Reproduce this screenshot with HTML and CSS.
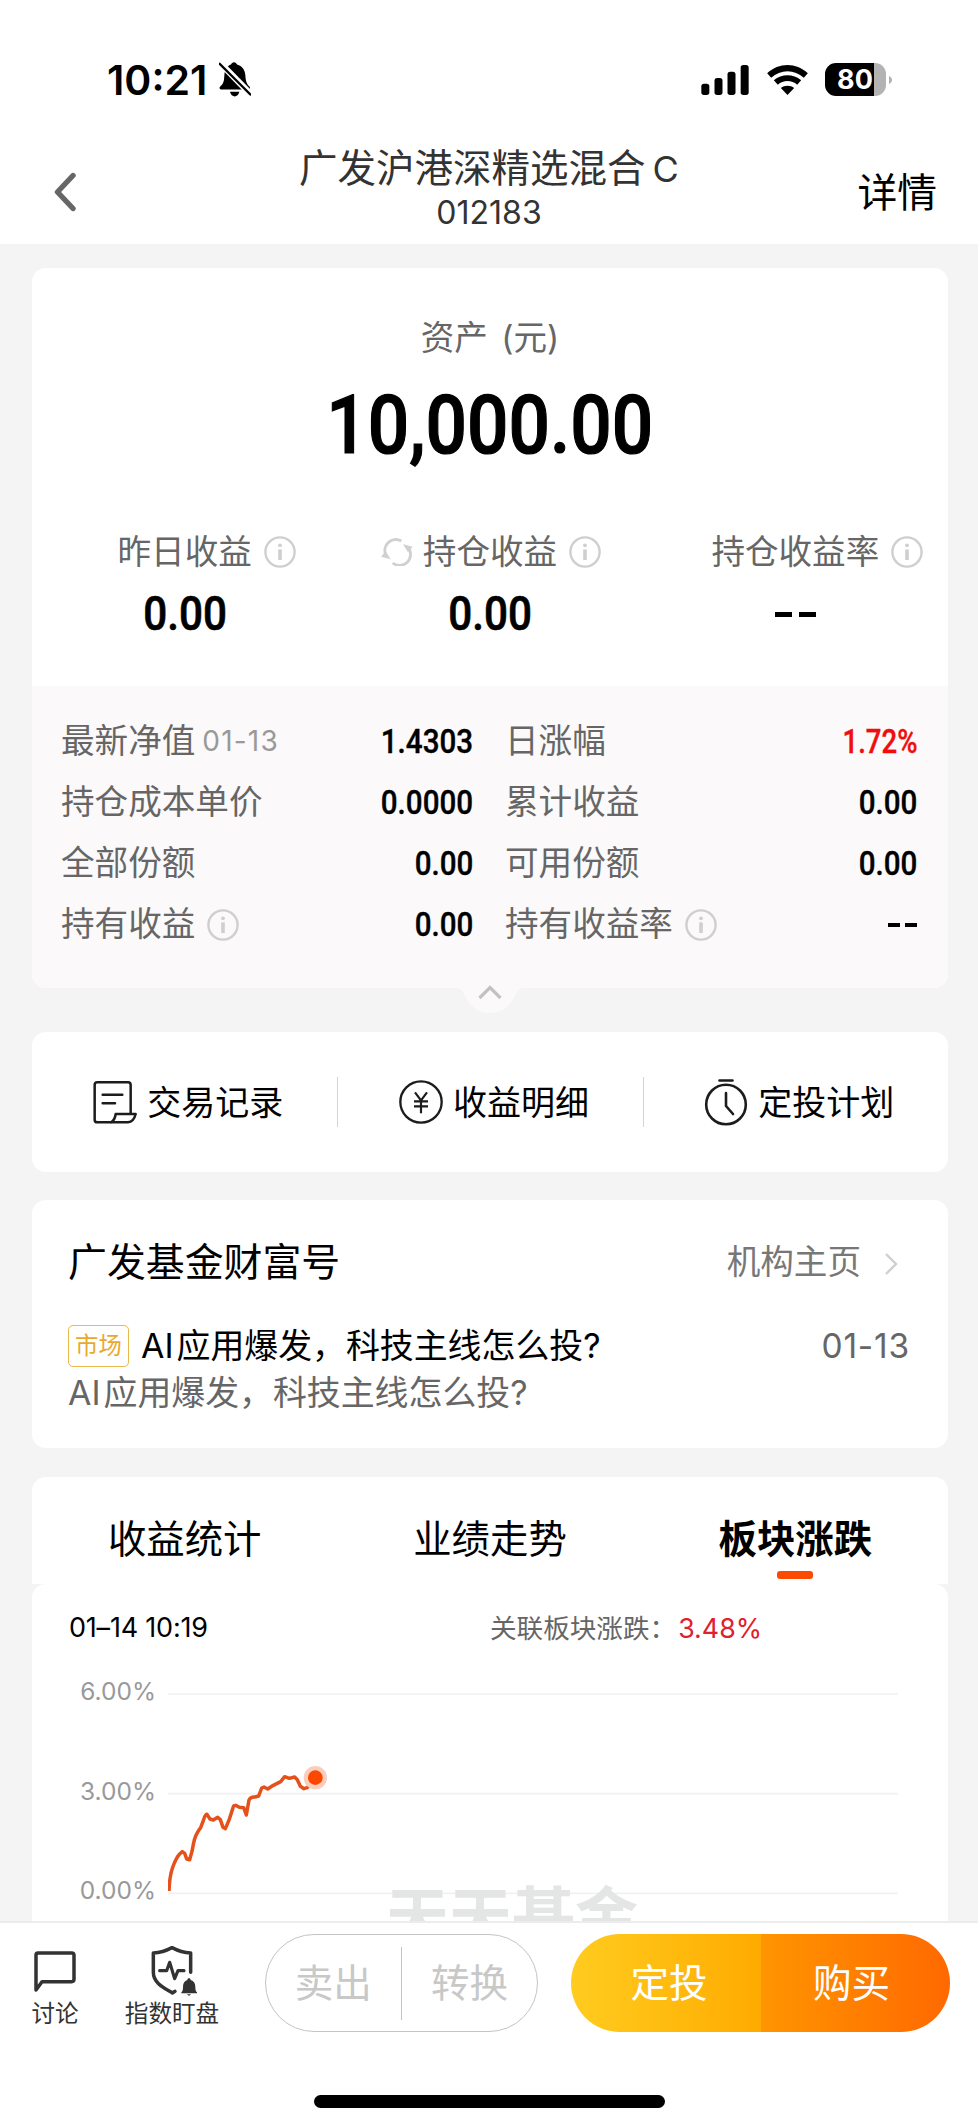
FILE: index.html
```html
<!DOCTYPE html>
<html lang="zh-CN">
<head>
<meta charset="utf-8">
<title>广发沪港深精选混合C</title>
<link rel="stylesheet" href="styles.css">
</head>
<body>
<svg class="defs" width="0" height="0">
  <symbol id="info" viewBox="0 0 32 32">
    <circle cx="16" cy="16" r="14.6" fill="none" stroke="#cfcfcf" stroke-width="2.4"/>
    <circle cx="16" cy="9.3" r="1.9" fill="#cfcfcf"/>
    <path d="M16 13.4V24" stroke="#cfcfcf" stroke-width="3.6" fill="none"/>
  </symbol>
</svg>
<div class="screen">
  <header class="top">
    <div class="status">
      <span class="time">10:21</span>
      <svg class="bell" viewBox="0 0 96 104">
        <path d="M45 0c4 0 8 3 9 7c16 4 24 17 25 32c1 18 4 26 13 35c2 3 1 8-3 8H7c-5 0-7-5-4-8c11-10 12-17 13-33C17 22 24 11 36 7c1-4 5-7 9-7z" fill="#000"/>
        <path d="M33 89h28c-2 9-8 14-14 14s-12-5-14-14z" fill="#000"/>
        <path d="M3 2l92 94" stroke="#fff" stroke-width="19"/>
        <path d="M2 5l92 92" stroke="#000" stroke-width="7" stroke-linecap="round"/>
      </svg>
      <svg class="signal" viewBox="64 72 142 90">
        <rect x="64" y="128" width="24" height="34" rx="8"/>
        <rect x="103.500" y="111" width="24" height="51" rx="8"/>
        <rect x="142.500" y="92" width="24" height="70" rx="8"/>
        <rect x="182" y="72" width="24" height="90" rx="8"/>
      </svg>
      <svg class="wifi" viewBox="260 72 122 90">
        <path d="M260 97C295 64 347 64 382 97L370 110C342 84 300 84 272 110Z"/>
        <path d="M280 118C304 98 338 98 362 118L350 131C334 116 308 116 292 131Z"/>
        <path d="M301 141C312 132 330 132 341 141L321 162Z"/>
      </svg>
      <span class="battery"><span class="charge">80</span></span>
      <svg class="nub" viewBox="0 0 3 8"><path d="M0 0C4 1.500 4 6.500 0 8Z" fill="#b3b3b3"/></svg>
    </div>
    <nav class="nav">
      <svg class="back" viewBox="0 0 22 40"><path d="M19 3.500L3.500 20l15.500 16.500" fill="none" stroke="#666" stroke-width="5.400" stroke-linecap="round" stroke-linejoin="round"/></svg>
      <div class="fund">
        <h1>广发沪港深精选混合<span class="gap">C</span></h1>
        <p class="code">012183</p>
      </div>
      <a class="detail">详情</a>
    </nav>
  </header>

  <main class="content">
    <section class="card asset">
      <p class="asset-label">资产 (元)</p>
      <p class="asset-value"><span class="din">10,000.00</span></p>
      <div class="gains">
        <div class="gain">
          <div class="gain-label"><i></i><span>昨日收益</span><svg class="info"><use href="#info"/></svg></div>
          <div class="gain-value"><span class="din">0.00</span></div>
        </div>
        <div class="gain">
          <div class="gain-label">
            <svg class="refresh" viewBox="64 57 94 84">
              <g fill="none" stroke="#d0d0d0" stroke-width="8.500">
                <path d="M80 113A33 33 0 0 1 124 66"/>
                <path d="M143 84A33 33 0 0 1 98 132"/>
              </g>
              <path d="M63 113L77 97L92 121Z M158 83L144 100L129 76Z" fill="#d0d0d0"/>
            </svg>
            <span>持仓收益</span><svg class="info"><use href="#info"/></svg>
          </div>
          <div class="gain-value"><span class="din">0.00</span></div>
        </div>
        <div class="gain">
          <div class="gain-label"><i></i><span>持仓收益率</span><svg class="info"><use href="#info"/></svg></div>
          <div class="gain-value"><b class="dash"></b><b class="dash"></b></div>
        </div>
      </div>
      <div class="facts">
        <div class="fact"><span>最新净值</span><span class="day">01-13</span><b class="din">1.4303</b></div>
        <div class="fact"><span>日涨幅</span><b class="din up">1.72%</b></div>
        <div class="fact"><span>持仓成本单价</span><b class="din">0.0000</b></div>
        <div class="fact"><span>累计收益</span><b class="din">0.00</b></div>
        <div class="fact"><span>全部份额</span><b class="din">0.00</b></div>
        <div class="fact"><span>可用份额</span><b class="din">0.00</b></div>
        <div class="fact"><span>持有收益</span><svg class="info"><use href="#info"/></svg><b class="din">0.00</b></div>
        <div class="fact"><span>持有收益率</span><svg class="info"><use href="#info"/></svg><span class="none"><b class="dash"></b><b class="dash"></b></span></div>
        <svg class="fold" viewBox="0 0 66 52">
          <path d="M0 26C10 26 8 51 33 51S56 26 66 26Z" fill="#fbf9fa"/>
          <path d="M22.500 36L33 25.500L43.500 36" fill="none" stroke="#c2c2c2" stroke-width="3.200"/>
        </svg>
      </div>
    </section>

    <section class="card actions">
      <a class="action">
        <svg viewBox="38 56 132 132" fill="none" stroke="#1c1c1c" stroke-width="7.500" stroke-linejoin="round" stroke-linecap="round">
          <path d="M151 158V71Q151 63 143 63H51Q43 63 43 71V175Q43 183 51 183H143Q160 182 166 158H106Q104 176 92 183"/>
          <path d="M67 100H126M67 126H104"/>
        </svg>
        <span>交易记录</span>
      </a>
      <a class="action">
        <svg viewBox="958 59 132 132" fill="none" stroke="#1c1c1c" stroke-width="7">
          <circle cx="1024" cy="125" r="62"/>
          <path d="M1006 96L1024 120L1042 96M1024 120V159M1003 123H1045M1003 138H1045" stroke-width="6.500"/>
        </svg>
        <span>收益明细</span>
      </a>
      <a class="action">
        <svg class="clock" viewBox="0 0 44 48" fill="none" stroke="#1c1c1c" stroke-width="2.600" stroke-linecap="round">
          <path d="M15.500 2.500H28.500"/>
          <circle cx="22" cy="26.500" r="19.800"/>
          <path d="M22 15V28L29 36" stroke-linejoin="round"/>
        </svg>
        <span>定投计划</span>
      </a>
    </section>

    <section class="card wealth">
      <div class="wealth-head">
        <h2>广发基金财富号</h2>
        <a>机构主页</a>
        <svg class="more" viewBox="0 0 14 24"><path d="M2 2L12 12L2 22" fill="none" stroke="#cfcfcf" stroke-width="2.400"/></svg>
      </div>
      <div class="post">
        <span class="tag">市场</span>
        <span class="post-title">AI<span class="gap">应用爆发，科技主线怎么投?</span></span>
        <time>01-13</time>
      </div>
      <p class="summary">AI<span class="gap">应用爆发，科技主线怎么投?</span></p>
    </section>

    <section class="trend">
      <div class="tabs">
        <a class="tab">收益统计</a>
        <a class="tab">业绩走势</a>
        <a class="tab active">板块涨跌</a>
      </div>
      <div class="panel">
        <div class="legend">
          <time>01–14 10:19</time>
          <span class="sector">关联板块涨跌：<em>3.48%</em></span>
        </div>
        <div class="chart">
          <div class="axis"><span>6.00%</span><span>3.00%</span><span>0.00%</span></div>
          <div class="plot">
            <svg width="730" height="262" viewBox="504 0 2190 786">
              <path d="M504 102H2694M504 401H2694M504 700H2694" stroke="#f1f1f1" stroke-width="5"/>
              <path d="M507 693C508 665 510 643 518 622C525 603 530 591 539 582L547 575L554 580L560 597L569 599L576 574L580 553C584 530 590 518 602 503L611 479Q615 464 621 463L630 477L640 480L653 472L661 479L669 502L676 506L683 490C691 473 694 456 701 438L707 436L718 442L731 443L739 465L747 420Q752 410 765 411L776 408L785 384L792 381L803 387L820 376L842 365L854 350L868 355L884 351L892 359L901 379L912 386L922 383L946 353" fill="none" stroke="#e4511a" stroke-width="10.500" stroke-linejoin="round"/>
              <circle cx="946" cy="353" r="35" fill="#fbcdbd"/>
              <circle cx="946" cy="353" r="22" fill="#fb4700"/>
            </svg>
            <span class="watermark">天天基金</span>
          </div>
        </div>
      </div>
    </section>
  </main>

  <footer class="bar">
    <div class="bar-row">
      <a class="tool talk">
        <svg viewBox="98 60 132 132" fill="none" stroke="#333" stroke-width="10.500" stroke-linejoin="round"><path d="M107 75Q107 69 113 69H214Q221 69 221 76V148Q221 155 214 155H125L107 180Z"/></svg>
        <span>讨论</span>
      </a>
      <a class="tool watch">
        <svg viewBox="450 44 144 156" fill="none" stroke="#333" stroke-width="10.500" stroke-linejoin="round" stroke-linecap="round">
          <path d="M572 126V68C550 67 533 61 516 52C499 61 482 67 460 68V126C460 158 491 172 517 188L525 183"/>
          <path d="M479 121H500L509 96L524 145L534 121H552" stroke-width="9.500"/>
          <path d="M567 144c3 0 5 2 5 5c10 3 14 11 14 20c0 9 1 13 5 17v3h-47v-3c4-4 5-8 5-17c0-9 4-17 13-20c0-3 2-5 5-5zM561 192h12q-6 8-12 0z" fill="#333" stroke="none"/>
        </svg>
        <span>指数盯盘</span>
      </a>
      <div class="pill sell"><a>卖出</a><i></i><a>转换</a></div>
      <div class="pill buy"><a class="plan">定投</a><a class="now">购买</a></div>
    </div>
    <div class="home"></div>
  </footer>
</div>
</body>
</html>
```
FILE: styles.css
```css
* { box-sizing: border-box; margin: 0; padding: 0; }
body {
  font-family: Inter, "Noto Sans CJK SC", sans-serif;
  font-size: 33.6px;
  line-height: 1.2;
  color: #000;
  background: #f4f4f4;
}
h1, h2 { font-weight: 400; }
i, em { font-style: normal; }
svg { display: block; flex: none; }
.defs { position: absolute; }
.screen { width: 978px; height: 2127px; display: flex; flex-direction: column; overflow: hidden; }

/* numerals in a narrow DIN-like cut */
.din {
  font-family: Roboto, sans-serif;
  font-weight: 500;
  display: inline-block;
  transform: scaleX(.87);
  -webkit-text-stroke: .4px currentColor;
}

.top { height: 244px; flex: none; background: #fff; }
.status { height: 130px; padding: 29px 0 0 107px; display: flex; align-items: center; }
.time { width: 112px; font-size: 41px; font-weight: 600; line-height: 48px; white-space: nowrap; }
.bell { width: 32px; height: 35px; }
.signal { width: 48px; height: 30px; margin-left: 450px; }
.wifi { width: 41px; height: 30px; margin-left: 18px; }
.battery {
  width: 61px; height: 33px; margin-left: 17px; border-radius: 11px; overflow: hidden;
  background: linear-gradient(90deg, #000 49px, #b3b3b3 49px);
}
.charge { display: block; width: 60px; text-align: center; font-size: 27px; font-weight: 700; line-height: 33px; color: #fff; }
.nub { width: 3px; height: 8px; margin-left: 3px; }

.nav { height: 114px; display: grid; grid-template-columns: 200px 1fr 200px; align-items: center; }
.back { width: 22px; height: 40px; margin: 9px 0 0 54px; }
.fund { text-align: center; color: #333; padding-top: 3px; }
.fund h1 { font-size: 38.5px; line-height: 46px; }
.fund .gap { margin-left: 7px; font-size: 36px; }
.code { font-size: 32px; line-height: 41px; }
.detail { font-size: 39.8px; line-height: 48px; margin-top: 11px; padding-right: 41px; text-align: right; }

.content { flex: 1; min-height: 0; overflow: hidden; padding: 24px 30px 0 32px; }
.card { background: #fff; border-radius: 14px; }

.asset { height: 720px; color: #666; }
.asset-label { padding-top: 46px; line-height: 48px; text-align: center; word-spacing: 4px; }
.asset-value { margin-top: 12px; height: 101px; line-height: 100px; text-align: center; font-size: 82px; color: #000; }
.asset-value .din { transform: scaleX(.89); -webkit-text-stroke-width: 1.2px; }
.gains { display: grid; grid-template-columns: repeat(3, 1fr); height: 211px; padding-top: 54px; }
.gain-label { display: grid; grid-template-columns: 1fr auto 1fr; align-items: center; height: 46px; white-space: nowrap; }
.info { width: 32px; height: 32px; margin-left: 12px; }
.refresh { width: 32px; height: 28px; justify-self: end; margin-right: 10px; }
.gain-value { height: 60px; margin-top: 9px; line-height: 60px; font-size: 48.5px; text-align: center; color: #000; display: flex; justify-content: center; align-items: center; gap: 7px; }
.gain-value .din { -webkit-text-stroke-width: .7px; }
.dash { width: 17px; height: 5px; background: #000; }

.facts {
  position: relative; height: 302px; padding: 25px 30px 0 29px; background: #fbf9fa;
  border-radius: 0 0 14px 14px;
  display: grid; grid-template-columns: 412px 412px; grid-auto-rows: 61px; column-gap: 32px;
}
.fact { display: flex; align-items: center; white-space: nowrap; }
.fact .din { margin-left: auto; font-size: 34px; color: #000; transform-origin: right; }
.fact .din.up { color: #f00d0d; transform: scaleX(.81); }
.day { margin-left: 7px; font-size: 28px; letter-spacing: 1.2px; color: #999; }
.none { margin-left: auto; display: flex; gap: 5px; }
.none .dash { width: 12px; height: 4px; }
.fold { position: absolute; left: 425px; bottom: -26px; width: 66px; height: 52px; }

.actions { margin-top: 44px; height: 140px; display: grid; grid-template-columns: repeat(3, 1fr); align-items: center; }
.action { height: 50px; display: flex; align-items: center; justify-content: center; gap: 10px; padding-left: 7px; font-size: 34px; }
.action + .action { border-left: 1.5px solid #d4d4d4; }
.action svg { width: 44px; height: 44px; }
.action span { padding-top: 2px; }
.action .clock { height: 48px; }

.wealth { margin-top: 28px; height: 248px; padding: 34px 38px 0 36px; }
.wealth-head { display: flex; align-items: center; height: 56px; }
.wealth-head h2 { font-size: 38.9px; line-height: 56px; }
.wealth-head a { margin-left: auto; color: #777; }
.more { width: 14px; height: 24px; margin: 3px 12px 0 23px; }
.post { display: flex; align-items: center; height: 42px; margin-top: 35px; font-size: 33.9px; }
.tag { width: 61px; height: 42px; border: 1.5px solid #e9b94c; border-radius: 5px; font-size: 23.4px; line-height: 39px; text-align: center; color: #e8a92f; }
.post-title { margin-left: 12px; }
.post time { margin-left: auto; font-size: 33.5px; letter-spacing: .8px; color: #666; }
.summary { margin-top: 3px; line-height: 46px; font-size: 33.9px; color: #666; }
.post-title .gap, .summary .gap { margin-left: 3px; }

.trend { margin-top: 29px; }
.tabs { height: 107px; background: #fff; border-radius: 14px 14px 0 0; display: grid; grid-template-columns: repeat(3, 1fr); }
.tab { padding-top: 38px; font-size: 38.4px; line-height: 48px; text-align: center; }
.active { font-weight: 700; }
.active::after { content: ""; display: block; width: 36px; height: 8px; margin: 8px auto 0; border-radius: 3px; background: #fc4a02; }
.panel { height: 400px; background: #fff; border-radius: 14px 14px 0 0; }
.legend { display: grid; grid-template-columns: 421px 1fr; padding: 24px 0 0 37px; line-height: 40px; font-size: 27px; letter-spacing: -.2px; }
.sector { font-size: 26.6px; letter-spacing: 0; color: #666; }
.sector em { color: #e0202c; font-size: 26.8px; margin-left: 2px; }
.chart { display: flex; margin-top: 12px; }
.axis { width: 124px; margin-right: 12px; padding-top: 11px; text-align: right; font-size: 24.5px; line-height: 40px; color: #999; display: flex; flex-direction: column; gap: 59.5px; }
.plot { position: relative; width: 730px; height: 262px; overflow: hidden; }
.watermark { position: absolute; left: 218px; top: 218px; font-size: 63px; font-weight: 700; line-height: 76px; color: #e4e6e6; white-space: nowrap; }

.bar { height: 206px; flex: none; background: #fff; border-top: 2px solid #ececec; }
.bar-row { display: flex; align-items: flex-start; padding-top: 11px; height: 172px; }
.tool { display: flex; flex-direction: column; align-items: center; font-size: 23.6px; line-height: 30px; color: #333; white-space: nowrap; }
.talk { width: 60px; margin-left: 25px; padding-top: 16px; }
.talk svg { width: 44px; height: 44px; margin-bottom: 5px; }
.watch { width: 110px; margin-left: 32px; padding-top: 11px; }
.watch svg { width: 48px; height: 52px; margin: 0 0 2px 3px; }
.pill { height: 98px; border-radius: 49px; display: flex; align-items: center; font-size: 38.6px; line-height: 48px; }
.sell { width: 273px; margin-left: 38px; border: 1.5px solid #c4c4c4; color: #c8c8c8; }
.sell a { flex: 1; text-align: center; }
.sell i { width: 1.5px; height: 73px; background: #c4c4c4; }
.buy { width: 379px; margin-left: 33px; overflow: hidden; color: #fff; }
.buy a { height: 98px; line-height: 98px; text-align: center; }
.plan { width: 190px; padding-left: 6px; background: linear-gradient(90deg, #ffcc1f, #ffab00); }
.now { width: 189px; padding-right: 8px; background: linear-gradient(90deg, #ff9500, #ff6900); }
.home { width: 351px; height: 13px; margin: 0 auto; border-radius: 7px; background: #000; }
```
